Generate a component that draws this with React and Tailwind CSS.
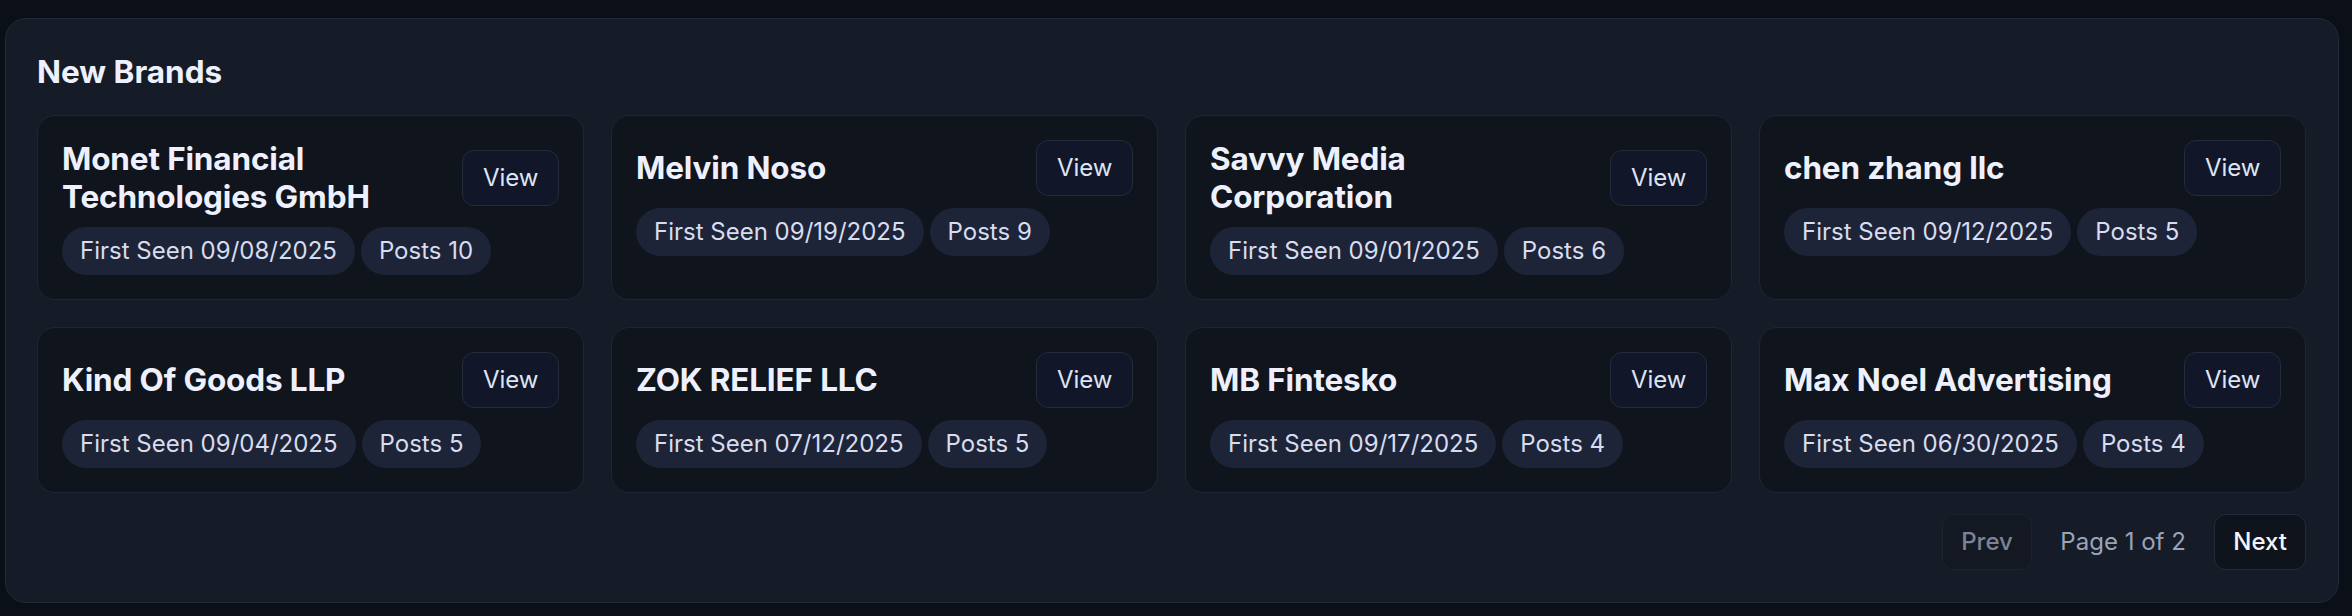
import React from "react";

const brands = [
  { name: "Monet Financial Technologies GmbH", seen: "09/08/2025", posts: 10 },
  { name: "Melvin Noso", seen: "09/19/2025", posts: 9 },
  { name: "Savvy Media Corporation", seen: "09/01/2025", posts: 6 },
  { name: "chen zhang llc", seen: "09/12/2025", posts: 5 },
  { name: "Kind Of Goods LLP", seen: "09/04/2025", posts: 5 },
  { name: "ZOK RELIEF LLC", seen: "07/12/2025", posts: 5 },
  { name: "MB Fintesko", seen: "09/17/2025", posts: 4 },
  { name: "Max Noel Advertising", seen: "06/30/2025", posts: 4 },
];

function BrandCard({ b }) {
  return (
    <div className="rounded-xl border border-[#1f2533] bg-[#10141c] p-4">
      <div className="flex items-center gap-3">
        <div className="min-w-0 flex-1 text-[21px] font-bold leading-[25px] tracking-[-0.1px] text-[#eef1fd]">
          {b.name}
        </div>
        <button className="shrink-0 rounded-lg border border-[#242b3b] bg-[#111729] px-[13px] py-1.5 text-base leading-6 text-[#dfe4f3]">
          View
        </button>
      </div>
      <div className="mt-2 flex flex-wrap gap-[4px]">
        <span className="rounded-full bg-[#1d2438] px-3 py-1 text-base leading-6 text-[#d7dcef]">
          First Seen {b.seen}
        </span>
        <span className="rounded-full bg-[#1d2438] px-3 py-1 text-base leading-6 text-[#d7dcef]">
          Posts {b.posts}
        </span>
      </div>
    </div>
  );
}

export default function App() {
  return (
    <div
      className="h-[410.6px] overflow-hidden bg-[#0b0f17] [zoom:1.5]"
      style={{ fontFamily: "Inter, 'Noto Sans', sans-serif" }}
    >
      <div className="pl-[3px] pr-[9px] pt-[12px]">
        <div className="rounded-[14px] border border-[#222937] bg-[#161b28] px-[21px] pb-[21px] pt-[21px]">
          <h2 className="text-[21px] font-bold leading-[28px] text-[#eef1fd]">New Brands</h2>
          <div className="mt-[15px] grid grid-cols-4 gap-[18px]">
            {brands.map((b) => (
              <BrandCard key={b.name} b={b} />
            ))}
          </div>
          <div className="mt-[14px] flex items-center justify-end gap-[19px]">
            <button className="rounded-lg border border-[#1c2230] bg-[#131823] px-3 py-1.5 text-base leading-6 font-medium text-[#7c8395]">
              Prev
            </button>
            <span className="text-base leading-6 text-[#9ba3b7]">Page 1 of 2</span>
            <button className="rounded-lg border border-[#232a39] bg-[#0f131b] px-3 py-1.5 text-base leading-6 font-medium text-[#f3f5fc]">
              Next
            </button>
          </div>
        </div>
      </div>
    </div>
  );
}
